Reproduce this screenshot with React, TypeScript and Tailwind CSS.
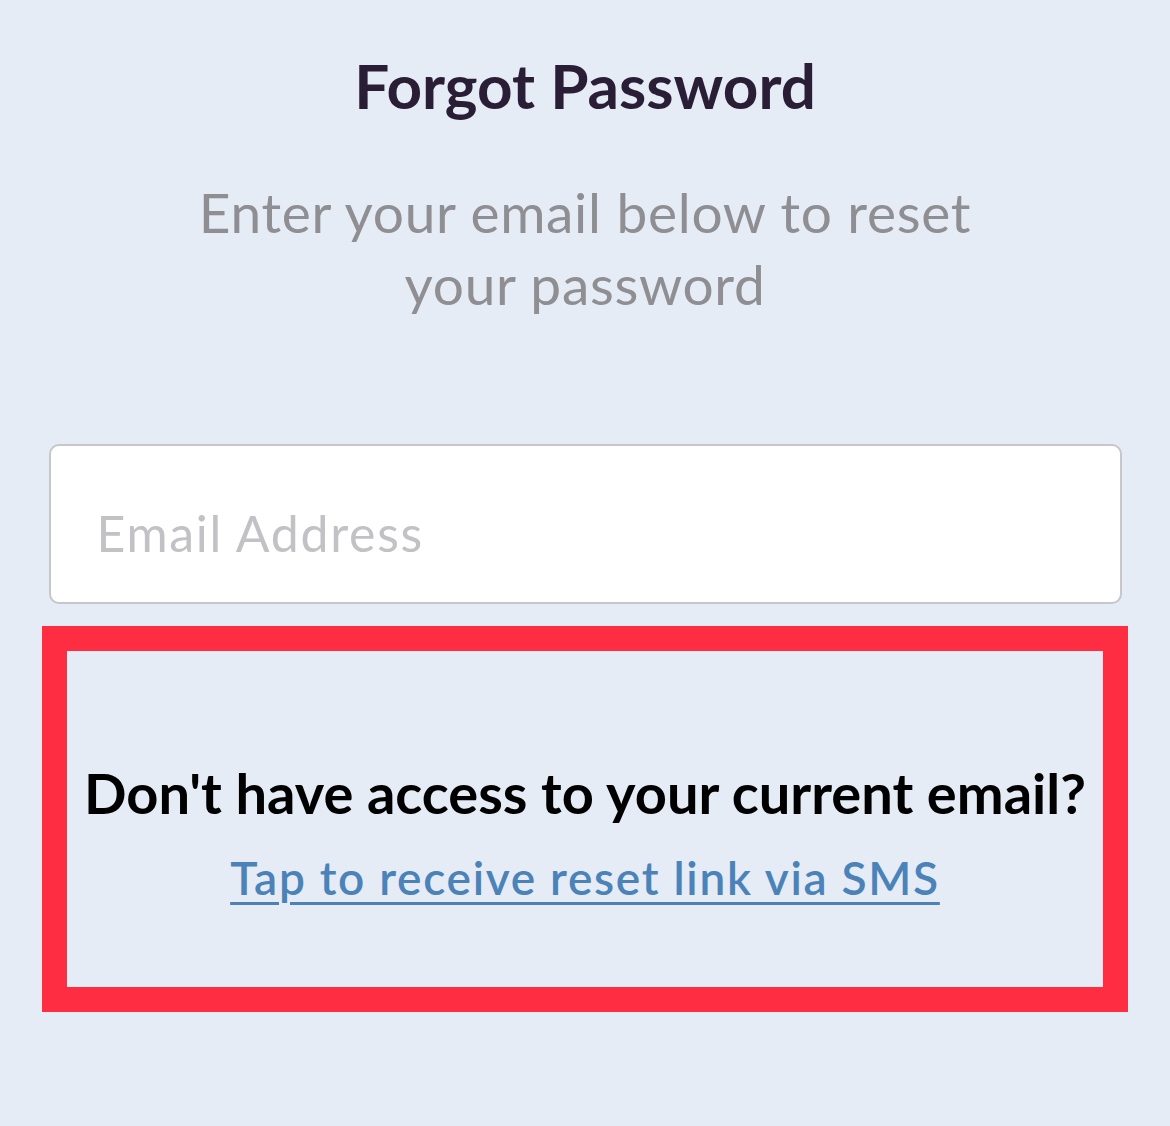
export default function App() {
  return (
    <div
      className="w-[1170px] h-[1126px] bg-[#e5ecf5] flex flex-col items-center overflow-hidden"
      style={{ fontFamily: "Lato, 'Noto Sans', sans-serif" }}
    >
      <h1 className="mt-[50px] text-[62px] leading-[70px] font-bold text-[#2a1d36]">
        Forgot Password
      </h1>

      <p className="mt-[56px] w-[860px] text-center text-[55px] leading-[72px] tracking-[0.7px] text-[#8e8e93]">
        Enter your email below to reset your password
      </p>

      <div className="mt-[124px] w-[1073px] h-[160px] rounded-[10px] border-2 border-[#c6c6cb] bg-white flex items-center px-[46px] pt-[18px]">
        <input
          type="email"
          placeholder="Email Address"
          className="w-full bg-transparent outline-none text-[50px] tracking-[1.7px] text-black placeholder:text-[#c2c2c6]"
        />
      </div>

      <section className="mt-[22px] w-[1086px] h-[386px] border-[25px] border-[#fe2d42] flex flex-col items-center justify-center pt-[30px]">
        <h2 className="text-[56px] leading-[60px] font-bold text-black">
          Don't have access to your current email?
        </h2>
        <a
          href="#"
          className="mt-[28px] text-[46px] leading-[54px] font-semibold tracking-[1.7px] text-[#4b82b8] underline underline-offset-[7px] decoration-[3px]"
        >
          Tap to receive reset link via SMS
        </a>
      </section>
    </div>
  );
}
